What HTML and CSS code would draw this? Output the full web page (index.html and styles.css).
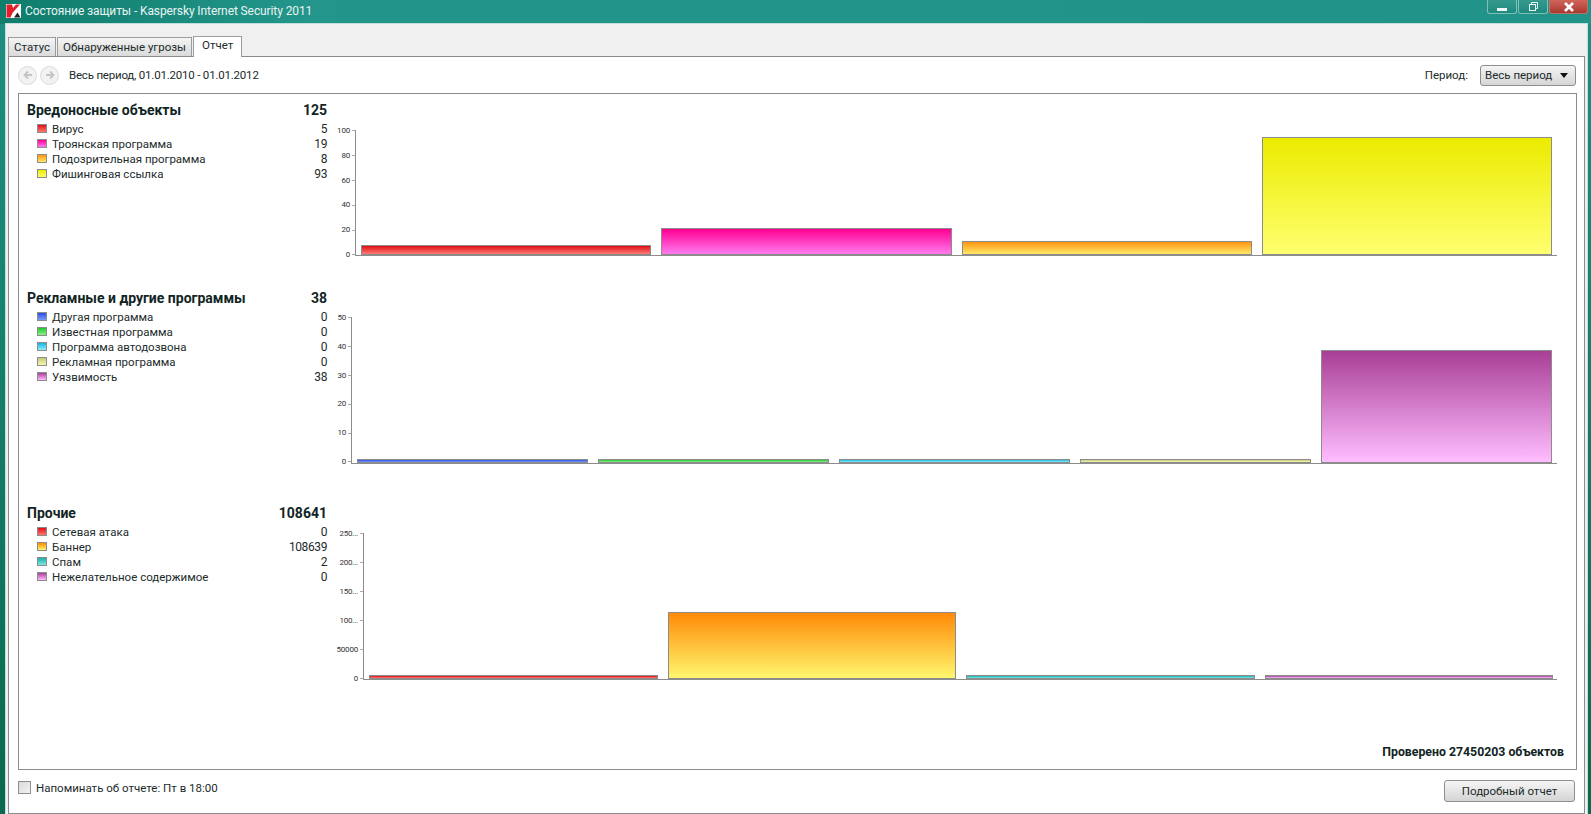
FILE: index.html
```html
<!DOCTYPE html>
<html lang="ru">
<head>
    <meta charset="UTF-8" />
    <title>Состояние защиты - Kaspersky Internet Security 2011</title>
    <link rel="stylesheet" href="styles.css">
</head>
<body>
    <div class="titlebar">
        <svg class="logo" width="15" height="14" viewBox="0 0 15 14">
            <rect width="15" height="14" fill="#fff"/>
            <path d="M0.500 0.500h5.500l1 3.500 3-3.500h4l-5 5.500-2.500 3-2 4.500h-4z" fill="#e0202a"/>
            <path d="M8 13.500l3.500-5 3 5z" fill="#222"/>
        </svg>
        <span class="title">Состояние защиты - Kaspersky Internet Security 2011</span>
        <div class="winbtns">
            <div class="winbtn"><span class="glyph-min"></span></div>
            <div class="winbtn">
                <svg width="9" height="9" viewBox="0 0 9 9" fill="none" stroke="#eaf6f4"><path d="M2.500 2.500v-2h6v6h-2"/><rect x="0.500" y="2.500" width="6" height="6"/></svg>
            </div>
            <div class="winbtn close">
                <svg width="12" height="10" viewBox="0 0 12 10" fill="none" stroke="#fff" stroke-width="2.600"><path d="M2 1l8 8M10 1l-8 8"/></svg>
            </div>
        </div>
    </div>

    <div class="window">
        <div class="tabs">
            <div class="tab">Статус</div>
            <div class="tab">Обнаруженные угрозы</div>
            <div class="tab active">Отчет</div>
        </div>

        <div class="panel">
            <div class="toolbar">
                <div class="navbtn">
                    <svg width="10" height="10" viewBox="0 0 10 10" fill="none" stroke="#c4c4c4" stroke-width="1.800"><path d="M9 5H2M5 1.500L1.500 5 5 8.500"/></svg>
                </div>
                <div class="navbtn">
                    <svg width="10" height="10" viewBox="0 0 10 10" fill="none" stroke="#c4c4c4" stroke-width="1.800"><path d="M1 5h7M5 1.500L8.500 5 5 8.500"/></svg>
                </div>
                <span class="range">Весь период, 01.01.2010 - 01.01.2012</span>
                <span class="period-label">Период:</span>
                <div class="select">Весь период<span class="caret"></span></div>
            </div>

            <div class="box">
                <div class="section s1">
                    <div class="summary">
                        <div class="head"><span>Вредоносные объекты</span><span>125</span></div>
                        <div class="row"><i class="sw red"></i><span>Вирус</span><b>5</b></div>
                        <div class="row"><i class="sw pink"></i><span>Троянская программа</span><b>19</b></div>
                        <div class="row"><i class="sw orange"></i><span>Подозрительная программа</span><b>8</b></div>
                        <div class="row"><i class="sw yellow"></i><span>Фишинговая ссылка</span><b>93</b></div>
                    </div>
                    <div class="chart">
                        <div class="ticks"><span>100</span><span>80</span><span>60</span><span>40</span><span>20</span><span>0</span></div>
                        <div class="plot">
                            <div class="bar red" style="height: 10px"></div>
                            <div class="bar pink" style="height: 27px"></div>
                            <div class="bar orange" style="height: 14px"></div>
                            <div class="bar yellow" style="height: 118px"></div>
                        </div>
                    </div>
                </div>

                <div class="section s2">
                    <div class="summary">
                        <div class="head"><span>Рекламные и другие программы</span><span>38</span></div>
                        <div class="row"><i class="sw blue"></i><span>Другая программа</span><b>0</b></div>
                        <div class="row"><i class="sw green"></i><span>Известная программа</span><b>0</b></div>
                        <div class="row"><i class="sw cyan"></i><span>Программа автодозвона</span><b>0</b></div>
                        <div class="row"><i class="sw khaki"></i><span>Рекламная программа</span><b>0</b></div>
                        <div class="row"><i class="sw purple"></i><span>Уязвимость</span><b>38</b></div>
                    </div>
                    <div class="chart">
                        <div class="ticks"><span>50</span><span>40</span><span>30</span><span>20</span><span>10</span><span>0</span></div>
                        <div class="plot">
                            <div class="bar blue" style="height: 4px"></div>
                            <div class="bar green" style="height: 4px"></div>
                            <div class="bar cyan" style="height: 4px"></div>
                            <div class="bar khaki" style="height: 4px"></div>
                            <div class="bar purple" style="height: 113px"></div>
                        </div>
                    </div>
                </div>

                <div class="section s3">
                    <div class="summary">
                        <div class="head"><span>Прочие</span><span>108641</span></div>
                        <div class="row"><i class="sw red"></i><span>Сетевая атака</span><b>0</b></div>
                        <div class="row"><i class="sw orange2"></i><span>Баннер</span><b>108639</b></div>
                        <div class="row"><i class="sw teal"></i><span>Спам</span><b>2</b></div>
                        <div class="row"><i class="sw purple"></i><span>Нежелательное содержимое</span><b>0</b></div>
                    </div>
                    <div class="chart">
                        <div class="ticks"><span>250...</span><span>200...</span><span>150...</span><span>100...</span><span>50000</span><span>0</span></div>
                        <div class="plot">
                            <div class="bar red" style="height: 4px"></div>
                            <div class="bar orange2" style="height: 67px"></div>
                            <div class="bar teal" style="height: 4px"></div>
                            <div class="bar purple" style="height: 4px"></div>
                        </div>
                    </div>
                </div>

                <div class="checked">Проверено 27450203 объектов</div>
            </div>

            <div class="footer">
                <label class="remind"><i class="checkbox"></i>Напоминать об отчете: Пт в 18:00</label>
                <div class="button">Подробный отчет</div>
            </div>
        </div>
    </div>
</body>
</html>
```

FILE: styles.css
```css
html, body {
    margin: 0;
    height: 814px;
    overflow: hidden;
}
body {
    display: flex;
    flex-direction: column;
    font-family: Roboto, "Open Sans", sans-serif;
    font-size: 11.500px;
    color: #1c2b2b;
    background: linear-gradient(to bottom, #1f8f82 0, #17826f 300px, #0b684e 814px);
}

/* title bar */
.titlebar {
    height: 24px;
    flex: none;
    display: flex;
    align-items: flex-start;
    box-sizing: border-box;
    padding: 3px 3px 0 6px;
    background: linear-gradient(to right, #0f7c6c 0, #23958a 300px, #229388 100%);
}
.logo {
    margin-top: 1px;
}
.title {
    margin-left: 4px;
    font-size: 12px;
    letter-spacing: -0.1px;
    line-height: 16px;
    color: #e8f4f2;
}
.winbtns {
    margin: -3px 0 0 auto;
    display: flex;
    gap: 1px;
}
.winbtn {
    width: 30px;
    height: 14px;
    display: flex;
    align-items: center;
    justify-content: center;
    box-sizing: border-box;
    border: 1px solid #7fc0b6;
    border-top: 0;
    border-radius: 0 0 3px 3px;
    background: linear-gradient(to bottom, #35998e, #1f8a7e);
}
.winbtn.close {
    width: 39px;
    border-color: #b9736a;
    background: linear-gradient(to bottom, #d2655a, #a8392e);
}
.glyph-min {
    width: 10px;
    height: 3px;
    margin-top: 5px;
    background: #f2f8f7;
}

/* window body */
.window {
    flex: 1;
    display: flex;
    flex-direction: column;
    margin: 0 4px 0 6px;
    padding: 0 2px;
    background: #f0f0f0;
    box-shadow: 0 0 0 1px #bfe0da;
}
.tabs {
    height: 32px;
    flex: none;
    display: flex;
    align-items: flex-end;
    gap: 1px;
}
.tab {
    height: 19px;
    box-sizing: border-box;
    padding: 0 5px;
    line-height: 19px;
    border: 1px solid #9c9c9c;
    border-bottom: 0;
    background: linear-gradient(to bottom, #f4f4f4, #dadada);
}
.tab.active {
    height: 21px;
    line-height: 16px;
    margin-bottom: -1px;
    padding: 0 8px;
    background: #fff;
    position: relative;
}
.panel {
    flex: 1;
    display: flex;
    flex-direction: column;
    background: #fff;
    border: 1px solid #8c8c8c;
}

.toolbar {
    height: 36px;
    flex: none;
    display: flex;
    align-items: center;
    padding: 0 8px 0 9px;
    gap: 3px;
}
.navbtn {
    width: 19px;
    height: 19px;
    display: flex;
    align-items: center;
    justify-content: center;
    box-sizing: border-box;
    border: 1px solid #dcdcdc;
    border-radius: 50%;
    background: #f2f2f2;
}
.range {
    margin-left: 7px;
    letter-spacing: -0.2px;
}
.period-label {
    margin: 0 9px 0 auto;
}
.select {
    width: 96px;
    height: 21px;
    box-sizing: border-box;
    display: flex;
    align-items: center;
    justify-content: space-between;
    padding: 0 7px 0 4px;
    border: 1px solid #8e8e8e;
    border-radius: 3px;
    background: linear-gradient(to bottom, #f4f4f4, #d6d6d6);
}
.caret {
    border: 4px solid transparent;
    border-top: 5px solid #111;
    border-bottom: 0;
}

/* report box */
.box {
    height: 677px;
    flex: none;
    display: flex;
    flex-direction: column;
    box-sizing: border-box;
    margin: 0 7px 0 9px;
    padding: 8px 19px 10px 8px;
    border: 1px solid #8c8c8c;
}
.section {
    display: flex;
    flex: none;
}
.s1 { height: 188px; }
.s2 { height: 215px; }
.s3 { height: 180px; }

.summary {
    width: 300px;
    flex: none;
}
.head {
    display: flex;
    justify-content: space-between;
    font-size: 14px;
    font-weight: 700;
    line-height: 17px;
    margin-bottom: 2px;
    color: #112424;
}
.row {
    display: flex;
    align-items: center;
    height: 15px;
    padding-left: 10px;
}
.row span {
    flex: 1;
}
.row b {
    font-weight: 400;
    font-size: 12px;
    letter-spacing: -0.4px;
}
.sw {
    width: 8px;
    height: 7px;
    flex: none;
    margin-right: 5px;
    border: 1px solid #8c8c8c;
}

.chart {
    flex: none;
    width: 1230px;
    display: flex;
    margin-top: 28px;
    font-size: 8px;
}
.s1 .chart { height: 126px; }
.s2 .chart { height: 146px; margin-top: 27px; }
.s3 .chart { height: 147px; }
.ticks {
    display: flex;
    flex: none;
    flex-direction: column;
    justify-content: space-between;
    align-items: flex-end;
    margin: -4px 0 -3px;
    line-height: 9px;
    color: #333;
    letter-spacing: -0.2px;
}
.ticks span::after {
    content: "";
    display: inline-block;
    width: 3px;
    height: 1px;
    margin-left: 2px;
    vertical-align: middle;
    background: #aaa;
}
.s1 .ticks { width: 28px; }
.s2 .ticks { width: 24px; }
.s3 .ticks { width: 36px; }
.plot {
    flex: 1;
    display: flex;
    align-items: flex-end;
    gap: 10px;
    padding: 0 5px;
    border-left: 1px solid #8c8c8c;
    border-bottom: 1px solid #8c8c8c;
}
.s2 .plot { margin-bottom: -1px; }
.s3 .plot { padding-right: 4px; }
.bar {
    flex: 1;
    box-sizing: border-box;
    border: 1px solid #8c8c8c;
}

.red { background: linear-gradient(to bottom, #dc0f18, #ff7a72); }
.pink { background: linear-gradient(to bottom, #ff0090, #ff7af0); }
.orange { background: linear-gradient(to bottom, #ff9510, #ffe86a); }
.orange2 { background: linear-gradient(to bottom, #ff8a08, #fff76e); }
.yellow { background: linear-gradient(to bottom, #ebeb00, #ffff70); }
.blue { background: linear-gradient(to bottom, #2a4ee0, #7a9cff); }
.green { background: linear-gradient(to bottom, #22c830, #8cf088); }
.cyan { background: linear-gradient(to bottom, #18b4e0, #8ceeff); }
.khaki { background: linear-gradient(to bottom, #c4c880, #f6f8a8); }
.purple { background: linear-gradient(to bottom, #a83f96, #ffbdff); }
.teal { background: linear-gradient(to bottom, #18b0b0, #80e8e0); }

.checked {
    margin: auto -7px 0 0;
    text-align: right;
    font-size: 12.300px;
    font-weight: 700;
    color: #112424;
}

.footer {
    flex: 1;
    display: flex;
    align-items: center;
    justify-content: space-between;
    padding: 0 9px;
}
.remind {
    display: flex;
    align-items: center;
    gap: 5px;
    margin-bottom: 8px;
}
.checkbox {
    width: 13px;
    height: 13px;
    box-sizing: border-box;
    border: 1px solid #8e8e8e;
    background: linear-gradient(to bottom right, #d8d8d8, #f4f4f4);
}
.button {
    width: 131px;
    height: 22px;
    margin-bottom: 2px;
    box-sizing: border-box;
    line-height: 20px;
    text-align: center;
    border: 1px solid #8e8e8e;
    border-radius: 3px;
    background: linear-gradient(to bottom, #f6f6f6, #d4d4d4);
}
```
